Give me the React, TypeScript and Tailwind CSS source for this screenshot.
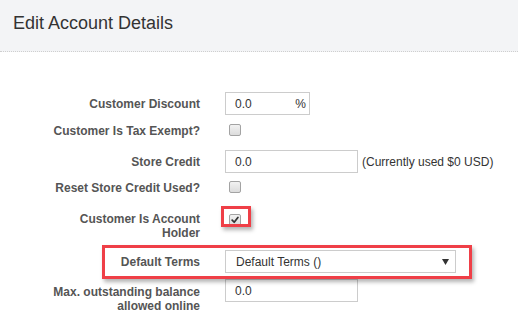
import React from "react";

const font = { fontFamily: '"Liberation Sans", Arial, sans-serif' };

function Box({ checked = false }: { checked?: boolean }) {
  return (
    <span className="relative inline-flex h-[12px] w-[12px] items-center justify-center rounded-[2px] border border-[#a3a3a3] bg-gradient-to-b from-[#f2f2f2] to-[#dcdcdc]">
      {checked && (
        <svg width="8" height="8" viewBox="0 0 10 10" className="block">
          <path d="M1.5 5.2 L4 7.8 L8.6 1.8" fill="none" stroke="#333" strokeWidth="2.2" strokeLinecap="round" strokeLinejoin="round" />
        </svg>
      )}
    </span>
  );
}

function Label({ children, className = "" }: { children: React.ReactNode; className?: string }) {
  return (
    <div className={`w-[150px] shrink-0 text-right text-[12px] font-bold leading-[14px] text-[#555] ${className}`}>
      {children}
    </div>
  );
}

export default function App() {
  return (
    <div className="relative h-[325px] w-[518px] overflow-hidden bg-white" style={font}>
      <div className="h-[52px] border-b border-dotted border-[#cfcfcf] bg-[#f3f4f6] pl-[13px] pt-[13px]">
        <h1 className="text-[18px] leading-[20px] text-[#333]">Edit Account Details</h1>
      </div>

      <div className="pl-[50px]">
        {/* Row 1 */}
        <div className="mt-[40px] flex h-[23px] items-center gap-[25px]">
          <Label>Customer Discount</Label>
          <div className="flex h-[23px] w-[85px] items-center justify-between border border-[#cccccc] pl-[9px] pr-[3px] text-[12px] text-[#333]">
            <span>0.0</span>
            <span>%</span>
          </div>
        </div>

        {/* Row 2 */}
        <div className="mt-[4px] flex h-[23px] items-center gap-[25px]">
          <Label>Customer Is Tax Exempt?</Label>
          <span className="pl-[4px] leading-none">
            <Box />
          </span>
        </div>

        {/* Row 3 */}
        <div className="mt-[8px] flex h-[23px] items-center gap-[25px]">
          <Label>Store Credit</Label>
          <div className="flex items-center gap-[4px]">
            <div className="flex h-[23px] w-[133px] items-center border border-[#cccccc] pl-[9px] text-[12px] text-[#333]">
              0.0
            </div>
            <span className="text-[12px] text-[#333]">(Currently used $0 USD)</span>
          </div>
        </div>

        {/* Row 4 */}
        <div className="mt-[3px] flex h-[23px] items-center gap-[25px]">
          <Label>Reset Store Credit Used?</Label>
          <span className="pl-[4px] leading-none">
            <Box />
          </span>
        </div>

        {/* Row 5 */}
        <div className="mt-[12px] flex h-[29px] items-start gap-[25px]">
          <Label className="mt-[1px]">Customer Is Account Holder</Label>
          <span className="relative pl-[4px] leading-none">
            <Box checked />
            <span className="pointer-events-none absolute left-[-4px] top-[-5px] h-[21px] w-[30px] border-[3px] border-[#ef3f47] shadow-[2px_3px_4px_rgba(0,0,0,0.3)]" />
          </span>
        </div>

        {/* Row 6 */}
        <div className="relative mt-[10px] flex h-[23px] items-center gap-[25px]">
          <Label>Default Terms</Label>
          <div className="flex h-[23px] w-[231px] items-center justify-between border border-[#cccccc] pl-[10px] pr-[6px] text-[12px] text-[#333]">
            <span>Default Terms ()</span>
            <svg width="7" height="6" viewBox="0 0 7 6" className="block">
              <path d="M0 0 H7 L3.5 6 Z" fill="#333" />
            </svg>
          </div>
          <span className="pointer-events-none absolute left-[52px] top-[-5px] h-[34px] w-[370px] border-[3px] border-[#ef3f47] shadow-[2px_3px_4px_rgba(0,0,0,0.3)]" />
        </div>

        {/* Row 7 */}
        <div className="mt-[6px] flex items-start gap-[25px]">
          <Label className="mt-[6px]">Max. outstanding balance allowed online</Label>
          <div className="flex h-[23px] w-[133px] items-center border border-[#cccccc] pl-[9px] text-[12px] text-[#333]">
            0.0
          </div>
        </div>
      </div>
    </div>
  );
}
